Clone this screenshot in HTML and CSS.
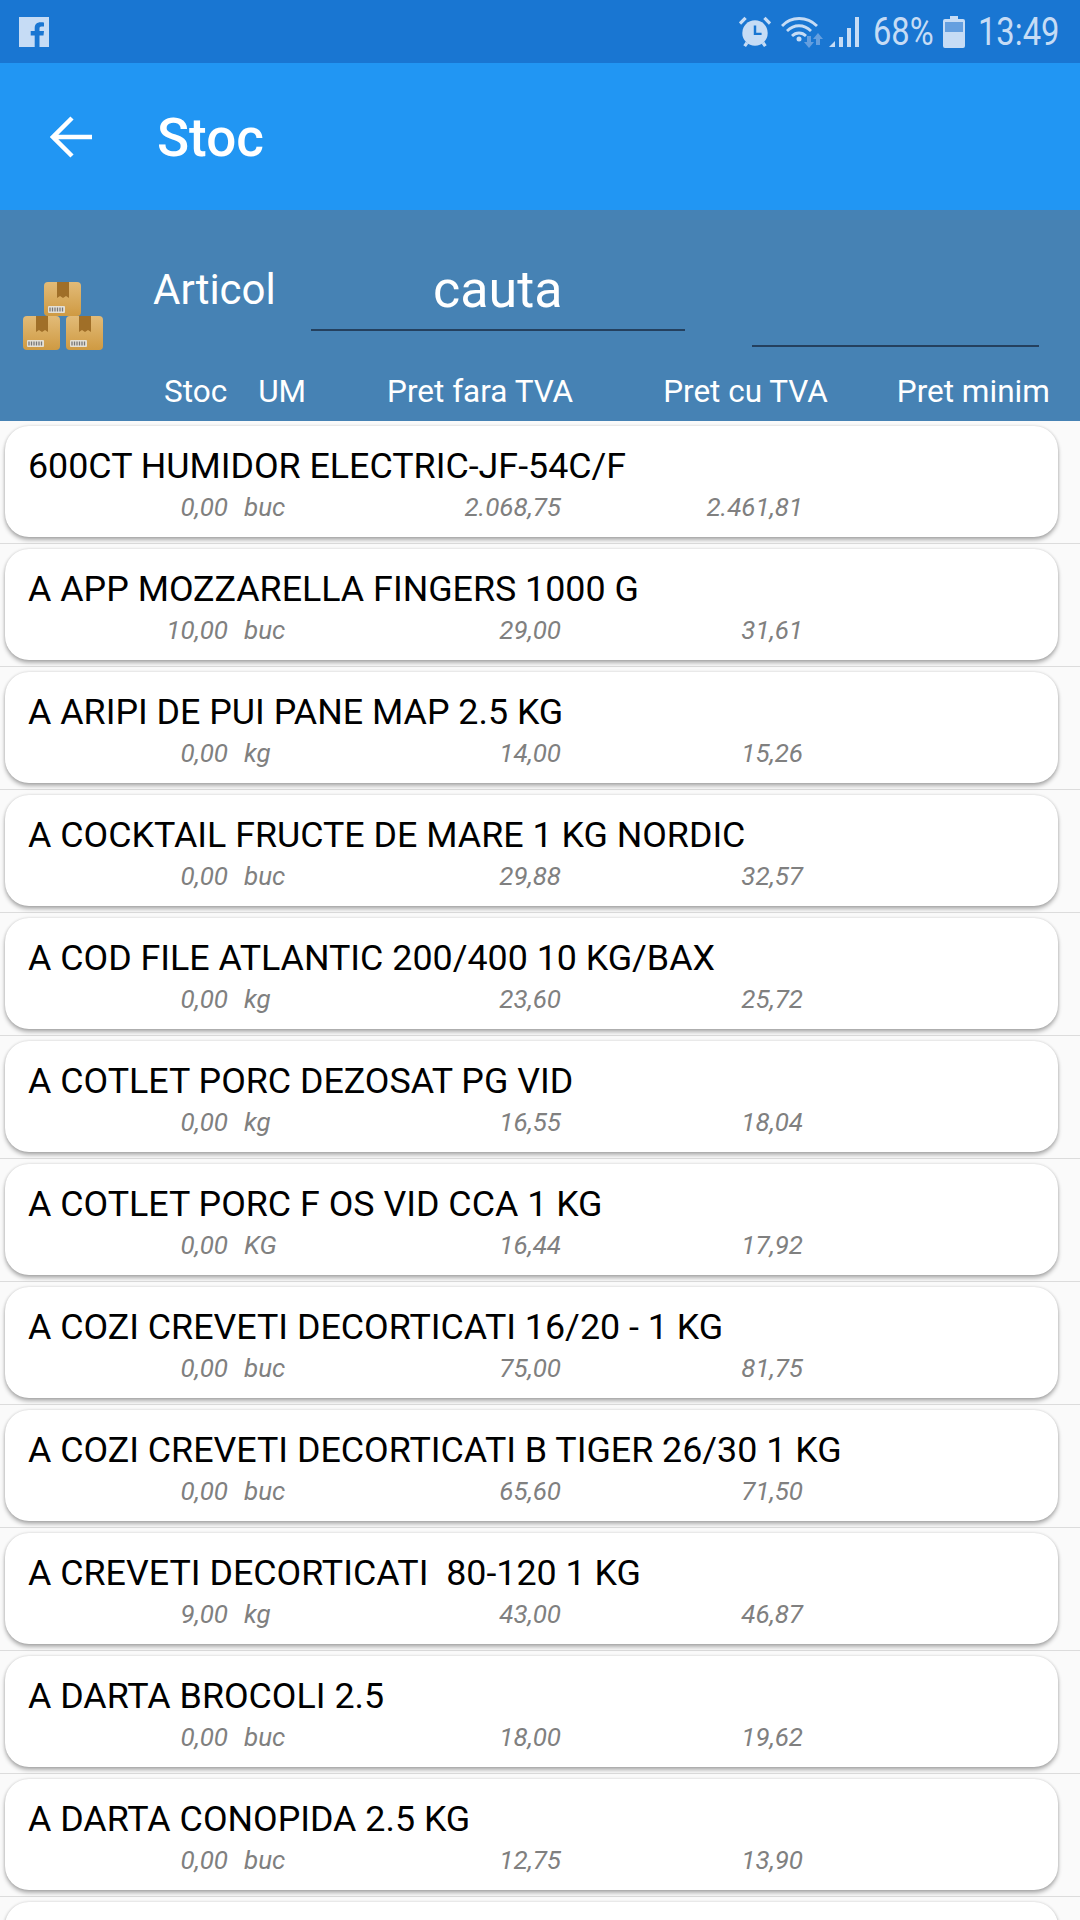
FILE: index.html
```html
<!DOCTYPE html>
<html lang="en">
<head>
    <meta charset="UTF-8">
    <meta name="viewport" content="width=device-width, initial-scale=1.0">
    <title>Stoc</title>
    <link rel="stylesheet" href="styles.css">
</head>
<body>
    <div class="status-bar">
        <svg class="fb-icon" width="30" height="30" viewBox="0 0 30 30">
            <path fill="#c6dcf5" d="M0 0H30V30H20.500V18.500H24.500L25 14H20.500V11.500C20.500 10.200 21 9.500 22.500 9.500H25V5.500C24.300 5.400 23 5.300 21.500 5.300C18 5.300 15.700 7.400 15.700 11V14H11.700V18.500H15.700V30H0Z"/>
        </svg>
        <div class="status-right">
            <svg class="alarm" width="32" height="32" viewBox="0 0 34 34">
                <circle cx="17" cy="18" r="13.500" fill="#c6dcf5"/>
                <path d="M1 8L7 2M33 8L27 2M6 32L8.500 28.500M28 32L25.500 28.500" stroke="#c6dcf5" stroke-width="3.500" fill="none"/>
                <path d="M17 10V19H24" stroke="#1976d2" stroke-width="2.600" fill="none"/>
            </svg>
            <svg class="wifi" width="42" height="32" viewBox="0 0 42 32">
                <path d="M1 10C10 0 26 0 36 10M6 15C13 8 23 8 30 15M11 20C15 16 21 16 25 20" stroke="#c6dcf5" stroke-width="2.800" fill="none"/>
                <circle cx="18" cy="23" r="2.500" fill="#c6dcf5"/>
                <path d="M26 20H30V26H33L28 32L23 26H26Z" fill="#659fdf"/>
                <path d="M37 17L42 23H39V29H35V23H32Z" fill="#659fdf"/>
            </svg>
            <svg class="signal" width="32" height="32" viewBox="0 0 32 32">
                <path d="M1 31L7 25V31Z" fill="#c6dcf5"/>
                <path d="M11 21H15V31H11ZM19 12H23V31H19ZM27 1H31V31H27Z" fill="#c6dcf5"/>
            </svg>
            <span class="status-text status-level">68%</span>
            <svg class="battery" width="22" height="32" viewBox="0 0 22 32">
                <path fill="#c6dcf5" d="M7 0H15V3H20Q22 3 22 5V30Q22 32 20 32H2Q0 32 0 30V5Q0 3 2 3H7Z"/>
                <rect x="2" y="6" width="18" height="10" fill="#659fdf"/>
            </svg>
            <span class="status-text status-time">13:49</span>
        </div>
    </div>

    <div class="app-bar">
        <svg class="back-icon" width="42" height="42" viewBox="0 0 42 42">
            <path d="M42 21H3M22 2L3 21L22 40" stroke="#fff" stroke-width="4.500" fill="none"/>
        </svg>
        <span class="app-title">Stoc</span>
    </div>

    <div class="list-header">
        <div class="search-row">
            <svg class="boxes-icon" width="82" height="72" viewBox="0 0 82 72">
                <defs>
                    <linearGradient id="box" x1="0" y1="0" x2="0" y2="1">
                        <stop offset="0" stop-color="#e2bb78"/>
                        <stop offset="1" stop-color="#cf9a42"/>
                    </linearGradient>
                    <g id="carton">
                        <rect width="37" height="34" rx="4" fill="url(#box)"/>
                        <path d="M13 0H25V16L22 14L19 16L16 14L13 16Z" fill="#a06f28"/>
                        <rect x="4" y="24" width="17" height="7" rx="1" fill="#e4e0d6"/>
                        <path d="M6 25.500V29.500M8.500 25.500V29.500M11 25.500V29.500M13.500 25.500V29.500M16 25.500V29.500M18.500 25.500V29.500" stroke="#777" stroke-width="1.300"/>
                    </g>
                </defs>
                <use href="#carton" x="22" y="2"/>
                <use href="#carton" x="1" y="36"/>
                <use href="#carton" x="44" y="36"/>
            </svg>
            <span class="articol-label">Articol</span>
            <div class="search-field">cauta</div>
            <div class="extra-field"></div>
        </div>
        <div class="column-row">
            <span class="col-stoc">Stoc</span>
            <span class="col-um">UM</span>
            <span class="col-fara">Pret fara TVA</span>
            <span class="col-cu">Pret cu TVA</span>
            <span class="col-min">Pret minim</span>
        </div>
    </div>

    <div class="stock-list">
        <div class="stock-row"><div class="card">
            <div class="item-name">600CT HUMIDOR ELECTRIC-JF-54C/F</div>
            <div class="item-info"><span class="qty">0,00</span><span class="unit">buc</span><span class="price">2.068,75</span><span class="price-vat">2.461,81</span></div>
        </div></div>
        <div class="stock-row"><div class="card">
            <div class="item-name">A APP MOZZARELLA FINGERS 1000 G</div>
            <div class="item-info"><span class="qty">10,00</span><span class="unit">buc</span><span class="price">29,00</span><span class="price-vat">31,61</span></div>
        </div></div>
        <div class="stock-row"><div class="card">
            <div class="item-name">A ARIPI DE PUI PANE MAP 2.5 KG</div>
            <div class="item-info"><span class="qty">0,00</span><span class="unit">kg</span><span class="price">14,00</span><span class="price-vat">15,26</span></div>
        </div></div>
        <div class="stock-row"><div class="card">
            <div class="item-name">A COCKTAIL FRUCTE DE MARE 1 KG NORDIC</div>
            <div class="item-info"><span class="qty">0,00</span><span class="unit">buc</span><span class="price">29,88</span><span class="price-vat">32,57</span></div>
        </div></div>
        <div class="stock-row"><div class="card">
            <div class="item-name">A COD FILE ATLANTIC 200/400 10 KG/BAX</div>
            <div class="item-info"><span class="qty">0,00</span><span class="unit">kg</span><span class="price">23,60</span><span class="price-vat">25,72</span></div>
        </div></div>
        <div class="stock-row"><div class="card">
            <div class="item-name">A COTLET PORC DEZOSAT PG VID</div>
            <div class="item-info"><span class="qty">0,00</span><span class="unit">kg</span><span class="price">16,55</span><span class="price-vat">18,04</span></div>
        </div></div>
        <div class="stock-row"><div class="card">
            <div class="item-name">A COTLET PORC F OS VID CCA 1 KG</div>
            <div class="item-info"><span class="qty">0,00</span><span class="unit">KG</span><span class="price">16,44</span><span class="price-vat">17,92</span></div>
        </div></div>
        <div class="stock-row"><div class="card">
            <div class="item-name">A COZI CREVETI DECORTICATI 16/20 - 1 KG</div>
            <div class="item-info"><span class="qty">0,00</span><span class="unit">buc</span><span class="price">75,00</span><span class="price-vat">81,75</span></div>
        </div></div>
        <div class="stock-row"><div class="card">
            <div class="item-name">A COZI CREVETI DECORTICATI B TIGER 26/30 1 KG</div>
            <div class="item-info"><span class="qty">0,00</span><span class="unit">buc</span><span class="price">65,60</span><span class="price-vat">71,50</span></div>
        </div></div>
        <div class="stock-row"><div class="card">
            <div class="item-name">A CREVETI DECORTICATI&nbsp; 80-120 1 KG</div>
            <div class="item-info"><span class="qty">9,00</span><span class="unit">kg</span><span class="price">43,00</span><span class="price-vat">46,87</span></div>
        </div></div>
        <div class="stock-row"><div class="card">
            <div class="item-name">A DARTA BROCOLI 2.5</div>
            <div class="item-info"><span class="qty">0,00</span><span class="unit">buc</span><span class="price">18,00</span><span class="price-vat">19,62</span></div>
        </div></div>
        <div class="stock-row"><div class="card">
            <div class="item-name">A DARTA CONOPIDA 2.5 KG</div>
            <div class="item-info"><span class="qty">0,00</span><span class="unit">buc</span><span class="price">12,75</span><span class="price-vat">13,90</span></div>
        </div></div>
        <div class="stock-row"><div class="card"></div></div>
    </div>
</body>
</html>
```

FILE: styles.css
```css
html, body {
    height: 1920px;
    overflow: hidden;
}

body {
    margin: 0;
    font-family: Roboto, sans-serif;
    background-color: #fafafa;
}

/* Status bar */
.status-bar {
    height: 63px;
    background-color: #1976d2;
    display: flex;
    align-items: center;
    justify-content: space-between;
    padding: 0 21px 0 19px;
}

.fb-icon {
    margin-top: 1px;
}

.status-right {
    display: flex;
    align-items: center;
}

.status-text {
    display: inline-block;
    font-size: 38px;
    line-height: 40px;
    color: #c6dcf5;
    white-space: nowrap;
    transform: scaleX(0.86);
    transform-origin: left center;
}

.status-level {
    width: 60px;
    margin-left: 13px;
}

.status-time {
    width: 81px;
    margin-left: 13px;
}

.wifi {
    margin-left: 10px;
}

.signal {
    margin-left: 5px;
}

.battery {
    margin-left: 10px;
}

/* App bar */
.app-bar {
    height: 147px;
    background-color: #2196f3;
    display: flex;
    align-items: center;
    padding-left: 50px;
}

.back-icon {
    margin-top: 1px;
}

.app-title {
    font-size: 53px;
    font-weight: 500;
    color: #fff;
    margin: 2px 0 0 65px;
}

/* Header above the list */
.list-header {
    height: 211px;
    background-color: #4682b4;
    color: #fff;
}

.search-row {
    height: 164px;
    display: flex;
    padding-left: 22px;
}

.boxes-icon {
    margin-top: 70px;
}

.articol-label {
    font-size: 42px;
    margin: 55px 0 0 49px;
}

.search-field {
    width: 374px;
    height: 121px;
    box-sizing: border-box;
    margin-left: 35px;
    padding-top: 50px;
    border-bottom: 2px solid #24405e;
    font-size: 52px;
    line-height: 60px;
    text-align: center;
}

.extra-field {
    width: 287px;
    height: 137px;
    box-sizing: border-box;
    margin-left: 67px;
    border-bottom: 2px solid #24405e;
}

.column-row {
    display: flex;
    font-size: 31.5px;
    line-height: 36px;
}

.col-stoc {
    margin-left: 164px;
}

.col-um {
    margin-left: 31px;
}

.col-fara {
    margin-left: 81px;
}

.col-cu {
    margin-left: 90px;
}

.col-min {
    margin-left: 69px;
}

/* Stock rows */
.stock-list {
    height: 1499px;
    overflow: hidden;
}

.stock-row {
    height: 123px;
    padding: 5px 22px 0 5px;
    box-sizing: border-box;
    border-bottom: 1px solid #dcdcdc;
}

.card {
    height: 111px;
    box-sizing: border-box;
    padding-left: 23px;
    background-color: #fff;
    border-radius: 24px;
    box-shadow: 0 3px 4px rgba(0, 0, 0, 0.3), 0 0 3px rgba(0, 0, 0, 0.15);
}

.item-name {
    font-size: 35.8px;
    line-height: 40px;
    padding-top: 20px;
    color: #000;
    white-space: nowrap;
}

.item-info {
    display: flex;
    font-size: 26px;
    font-style: italic;
    line-height: 30px;
    margin-top: 6px;
    color: #808080;
}

.qty {
    width: 200px;
    text-align: right;
}

.unit {
    width: 60px;
    margin-left: 16px;
}

.price {
    width: 262px;
    text-align: right;
    margin-left: -5px;
}

.price-vat {
    width: 242px;
    text-align: right;
}
```
